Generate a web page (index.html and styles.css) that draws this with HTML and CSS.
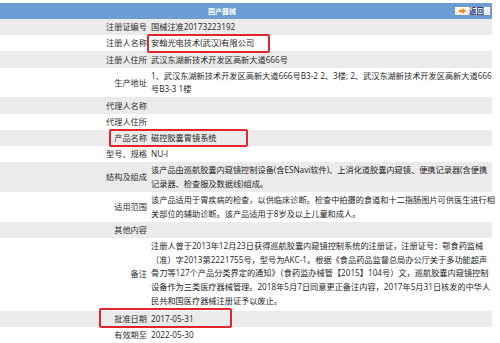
FILE: index.html
```html
<!DOCTYPE html>
<html lang="zh-CN">
<head>
<meta charset="utf-8">
<title>国产器械</title>
<link rel="stylesheet" href="styles.css">
</head>
<body>
<div class="panel">
  <div class="bar">
    <span class="bar-title">国产器械</span>
    <button class="back" type="button">
      <svg class="back-icon" width="7" height="6" viewBox="0 0 7 6"><path d="M0 1.8H3.5V0L7 3L3.5 6V4.2H0Z" fill="#f08a10"/></svg>
      <span>返回</span>
    </button>
  </div>
  <table class="info">
    <colgroup><col class="col-label"><col class="col-value"></colgroup>
    <tr><th>注册证编号</th><td>国械注准20173223192</td></tr>
    <tr><th>注册人名称</th><td>安翰光电技术(武汉)有限公司</td></tr>
    <tr><th>注册人住所</th><td>武汉东湖新技术开发区高新大道666号</td></tr>
    <tr><th>生产地址</th><td>1、武汉东湖新技术开发区高新大道666号B3-2 2、3楼; 2、武汉东湖新技术开发区高新大道666<br>号B3-3 1楼</td></tr>
    <tr><th>代理人名称</th><td></td></tr>
    <tr><th>代理人住所</th><td></td></tr>
    <tr><th>产品名称</th><td>磁控胶囊胃镜系统</td></tr>
    <tr><th>型号、规格</th><td>NU-I</td></tr>
    <tr><th>结构及组成</th><td>该产品由巡航胶囊内窥镜控制设备(含ESNavi软件)、上消化道胶囊内窥镜、便携记录器(含便携<br>记录器、检查服及数据线)组成。</td></tr>
    <tr><th>适用范围</th><td>该产品适用于胃疾病的检查，以供临床诊断。检查中拍摄的食道和十二指肠图片可供医生进行相<br>关部位的辅助诊断。该产品适用于8岁及以上儿童和成人。</td></tr>
    <tr><th>其他内容</th><td></td></tr>
    <tr class="tall"><th>备注</th><td>注册人曾于2013年12月23日获得巡航胶囊内窥镜控制系统的注册证，注册证号：鄂食药监械<br>（准）字2013第2221755号，型号为AKC-1。根据《食品药品监督总局办公厅关于多功能超声<br>骨刀等127个产品分类界定的通知》（食药监办械管【2015】104号）文，巡航胶囊内窥镜控制<br>设备作为三类医疗器械管理。2018年5月7日同意更正备注内容，2017年5月31日核发的中华人<br>民共和国医疗器械注册证予以废止。</td></tr>
    <tr><th>批准日期</th><td>2017-05-31</td></tr>
    <tr><th>有效期至</th><td>2022-05-30</td></tr>
  </table>
  <div class="mark mark-name"></div>
  <div class="mark mark-product"></div>
  <div class="mark mark-date"></div>
</div>
</body>
</html>
```
FILE: styles.css
```css
html, body {
  margin: 0;
  padding: 0;
  background: #ffffff;
}
body {
  font-family: "Open Sans", "Noto Sans CJK SC", sans-serif;
  font-size: 8.2px;
  color: #222222;
}
.panel {
  position: relative;
  width: 492px;
  padding-top: 3px;
}
.bar {
  display: flex;
  align-items: center;
  height: 16px;
  background: #6a9dd4;
}
.bar-title {
  flex: 1;
  text-align: center;
  padding-right: 10px;
  color: #ffffff;
  font-weight: bold;
  font-size: 7px;
  font-family: "Noto Sans CJK SC", sans-serif;
}
.back {
  display: flex;
  align-items: center;
  gap: 3px;
  height: 10px;
  width: 37px;
  margin: 0 1px 0 0;
  padding: 0 0 0 4px;
  border: 1px solid #7d97b8;
  border-radius: 1px;
  background: linear-gradient(#ffffff, #e6e9ee);
  color: #1b3f7e;
  font-family: "Noto Sans CJK SC", sans-serif;
  font-size: 7.5px;
  font-weight: bold;
  line-height: 8px;
}
.back-icon {
  display: block;
}
.info {
  width: 492px;
  table-layout: fixed;
  border-collapse: collapse;
}
.col-label {
  width: 149px;
}
.info tr:nth-child(odd) {
  background: #ebebeb;
}
.info th,
.info td {
  line-height: 13.6px;
  padding: 1.3px 0;
  vertical-align: middle;
  white-space: nowrap;
}
.info th {
  padding-right: 2px;
  text-align: right;
  font-weight: normal;
  color: #2e2e2e;
}
.info td {
  padding-left: 2px;
  color: #1e1e1e;
}
.info tr.tall td {
  padding-bottom: 3.5px;
}
.mark {
  position: absolute;
  border: 2px solid #e3262b;
  border-radius: 2px;
  box-sizing: border-box;
}
.mark-name {
  left: 147px;
  top: 34px;
  width: 123px;
  height: 19px;
}
.mark-product {
  left: 109px;
  top: 129px;
  width: 139px;
  height: 18px;
}
.mark-date {
  left: 99px;
  top: 308px;
  width: 133px;
  height: 20px;
}
```
